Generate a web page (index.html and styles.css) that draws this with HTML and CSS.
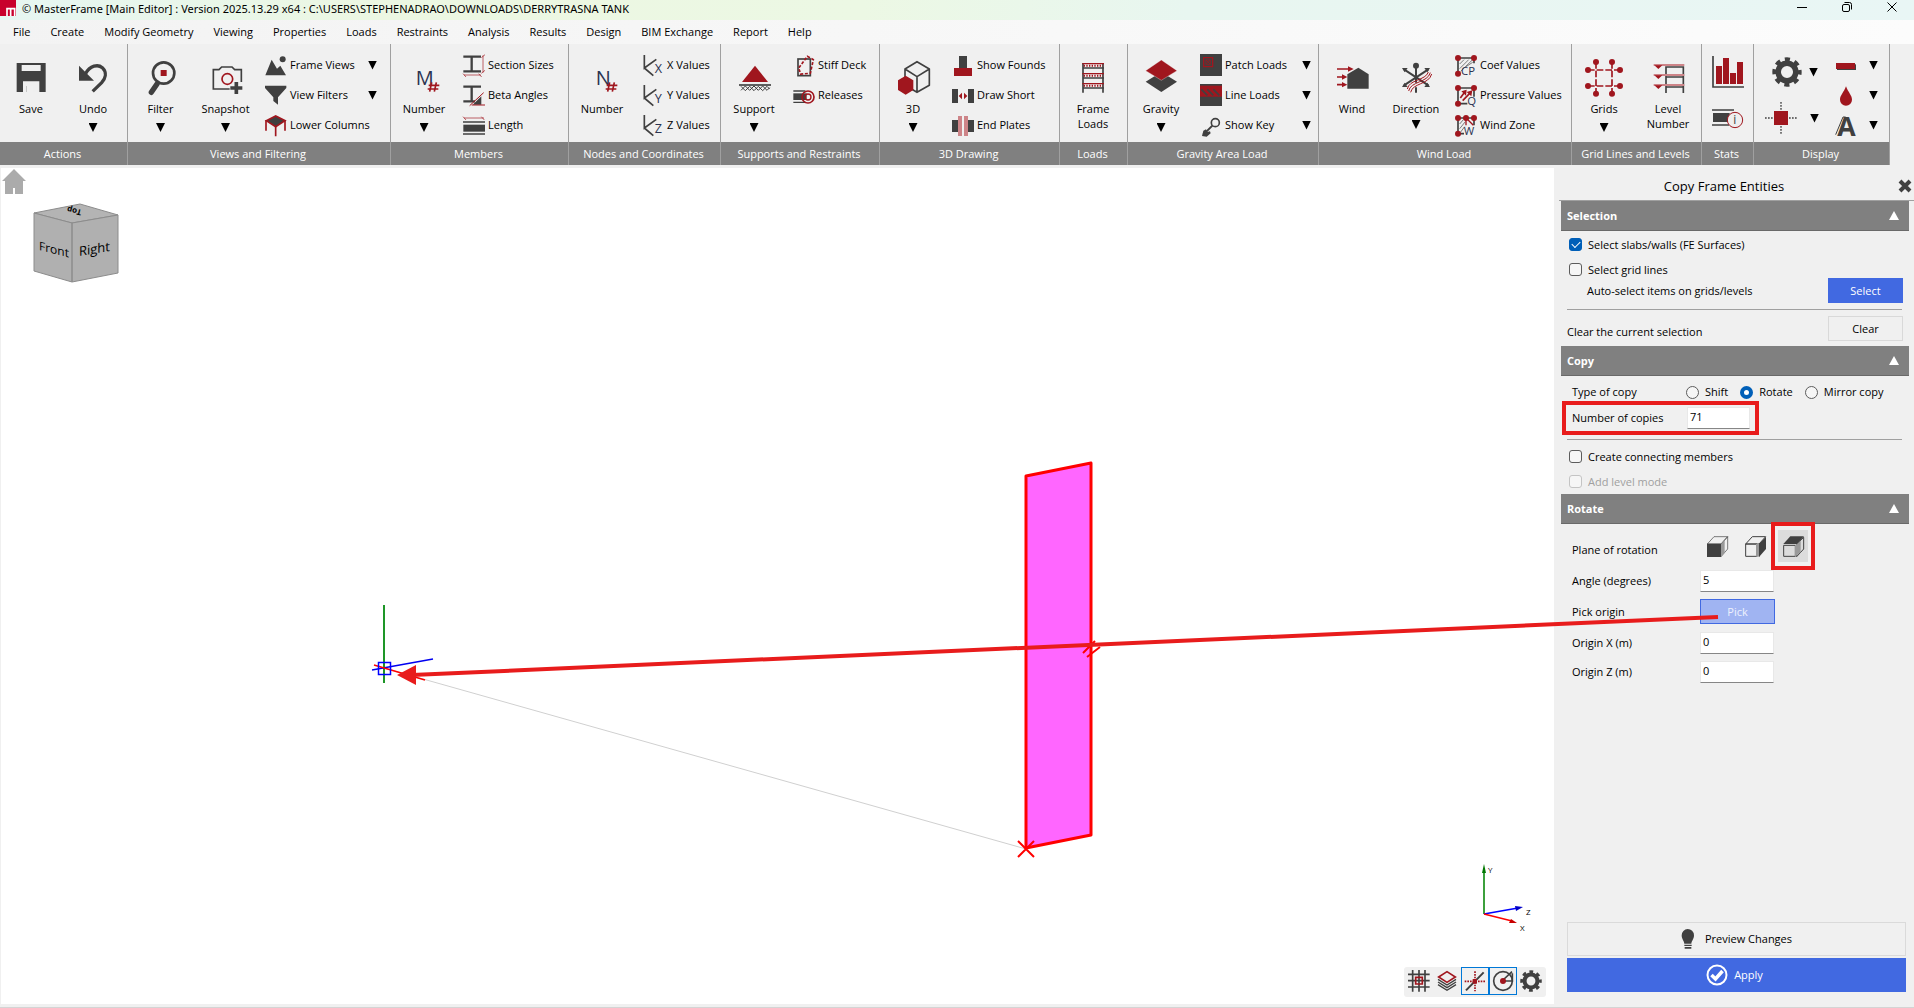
FILE: index.html
```html
<!DOCTYPE html>
<html lang="en">
<head>
<meta charset="utf-8">
<title>MasterFrame [Main Editor]</title>
<link rel="stylesheet" href="styles.css">
</head>
<body>
<svg class="defs" aria-hidden="true">
  <symbol id="gear" viewBox="-46 -46 92 92"><circle r="27" class="nk" stroke-width="17"/><circle r="37" class="nk" stroke-width="16" stroke-dasharray="15 14.06" stroke-dashoffset="7.5"/></symbol>
</svg>

<header class="titlebar">
  <svg class="logo" viewBox="0 0 48 48"><rect width="48" height="48" fill="#c8002c"/><path d="M21 48V26h23v22M32 48V28" fill="none" stroke="#fff" stroke-width="5"/></svg>
  <h1 class="title">© MasterFrame [Main Editor] : Version 2025.13.29 x64 : C:\USERS\STEPHENADRAO\DOWNLOADS\DERRYTRASNA TANK</h1>
  <div class="win">
    <button aria-label="Minimise"><svg viewBox="0 0 12 12"><path d="M1 6.500H11"/></svg></button>
    <button aria-label="Restore"><svg viewBox="0 0 12 12"><rect x="1.500" y="3.500" width="7" height="7" rx="1.500"/><path d="M3.500 1.500H8.500a2 2 0 0 1 2 2V8.500"/></svg></button>
    <button aria-label="Close"><svg viewBox="0 0 12 12"><path d="M1.500 1.500l9 9M10.500 1.500l-9 9"/></svg></button>
  </div>
</header>

<nav class="menu">
  <button>File</button><button>Create</button><button>Modify Geometry</button><button>Viewing</button><button>Properties</button><button>Loads</button><button>Restraints</button><button>Analysis</button><button>Results</button><button>Design</button><button>BIM Exchange</button><button>Report</button><button>Help</button>
</nav>

<div class="ribbon">
  <section class="group g-actions">
    <div class="tools">
      <button class="big"><svg viewBox="43 180 108 108"><path class="k" d="M54 189h87v87H103v-18H84v18H54z"/><path fill="#efefef" d="M69 195h57v18H69zM73 244h49v32H103v-18H84v18H73z"/></svg><span>Save</span></button>
      <button class="big"><svg viewBox="231 180 108 108"><path class="k" d="M243 197v45h45z"/><path class="nk" stroke-width="10" d="M262 222C276 196 300 192 313 203 328 218 322 236 311 248L284 274"/></svg><span>Undo</span><i class="dd"></i></button>
    </div>
    <h2>Actions</h2>
  </section>

  <section class="group g-views">
    <div class="tools">
      <button class="big"><svg viewBox="430 180 108 108"><circle class="nk" cx="492" cy="219" r="32" stroke-width="8"/><path class="nk" stroke-width="16" stroke-linecap="round" d="M472 252L455 277"/><rect class="r" x="483" y="210" width="18" height="18"/></svg><span>Filter</span><i class="dd"></i></button>
      <button class="big"><svg viewBox="623 180 108 108"><path class="nk" stroke-width="5" d="M688 267H639V209H656L664 201H695L703 209H723V246"/><circle class="nr" cx="681" cy="237" r="16" stroke-width="5"/><path class="nk" stroke-width="11" d="M690 264H726M708 246V282"/></svg><span>Snapshot</span><i class="dd"></i></button>
      <div class="stack">
        <button class="small"><svg viewBox="796 162 66 66"><path class="k" d="M797 226L816 179 832 206 842 197 859 226z"/><circle class="k" cx="849" cy="178" r="9"/></svg><span>Frame Views</span><i class="dd"></i></button>
        <button class="small"><svg viewBox="796 252 66 66"><path class="k" d="M796 257H860V264L835 292V314L821 303V292L796 264z"/></svg><span>View Filters</span><i class="dd"></i></button>
        <button class="small"><svg viewBox="796 342 66 66"><path class="nr" stroke-width="5" d="M799 361V392M856 361V392M828 380V409"/><path class="k" stroke="#a0161e" stroke-width="5" d="M800 362L828 348 856 362 828 380z"/></svg><span>Lower Columns</span></button>
      </div>
    </div>
    <h2>Views and Filtering</h2>
  </section>

  <section class="group g-members">
    <div class="tools">
      <button class="big"><svg viewBox="80 180 108 108"><text class="nv" x="109" y="254" font-size="60">M</text><path class="nr" stroke-width="5" d="M157 247L151 275M171 247L165 275M148 256H180M145 267H177"/></svg><span>Number</span><i class="dd"></i></button>
      <div class="stack">
        <button class="small"><svg viewBox="249 162 66 66"><path class="nk" stroke-width="7" d="M250 170H303M250 214H303M275 170V214"/><path class="nr" stroke-width="2" d="M309 166V218M304 173L315 164M304 220L315 211M252 225H303M249 221L258 231M296 221L305 231"/></svg><span>Section Sizes</span></button>
        <button class="small"><svg viewBox="249 252 66 66"><path class="nk" stroke-width="7" d="M250 260H303M250 304H285M275 260V304"/><path class="k" d="M278 314L304 289V314z"/><path class="nr" stroke-width="3" d="M269 317L311 278M275 315H315"/></svg><span>Beta Angles</span></button>
        <button class="small"><svg viewBox="249 342 66 66"><path class="nr" stroke-width="2" d="M252 354H312M249 350L258 360M304 350L313 360"/><rect class="k" x="250" y="374" width="65" height="21"/><path class="nk" stroke-width="5" d="M249 366H315M249 402H315"/></svg><span>Length</span></button>
      </div>
    </div>
    <h2>Members</h2>
  </section>

  <section class="group g-nodes">
    <div class="tools">
      <button class="big"><svg viewBox="614 180 108 108"><text class="nv" x="649" y="254" font-size="60">N</text><path class="nr" stroke-width="5" d="M691 247L685 275M705 247L699 275M682 256H714M679 267H711"/></svg><span>Number</span></button>
      <div class="stack">
        <button class="small"><svg viewBox="785 162 66 66"><path class="nk" stroke-width="5" d="M792 165V204L828 178M792 204L819 227"/><text class="nv" x="823" y="218" font-size="38">X</text></svg><span>X Values</span></button>
        <button class="small"><svg viewBox="785 252 66 66"><path class="nk" stroke-width="5" d="M792 255V294L828 268M792 294L819 317"/><text class="nv" x="823" y="308" font-size="38">Y</text></svg><span>Y Values</span></button>
        <button class="small"><svg viewBox="785 342 66 66"><path class="nk" stroke-width="5" d="M792 345V384L828 358M792 384L819 407"/><text class="nv" x="823" y="398" font-size="38">Z</text></svg><span>Z Values</span></button>
      </div>
    </div>
    <h2>Nodes and Coordinates</h2>
  </section>

  <section class="group g-supports">
    <div class="tools">
      <button class="big"><svg viewBox="1071 180 108 108"><path class="r" d="M1128 197L1167 246H1089z"/><path class="nk" stroke-width="5" d="M1080 255H1176"/><path class="nk" stroke-width="3" d="M1086 259l13 13 13-13 13 13 13-13 13 13 13-13 8 8M1086 271l13-13 13 13 13-13 13 13 13-13 13 13 8-8"/></svg><span>Support</span><i class="dd"></i></button>
      <div class="stack">
        <button class="small"><svg viewBox="1239 162 66 66"><rect class="nk" x="1254" y="177" width="37" height="50" stroke-width="5"/><path class="nr" stroke-width="5" stroke-dasharray="9 5" d="M1282 169L1300 179 1291 220 1262 222 1256 204z"/></svg><span>Stiff Deck</span></button>
        <button class="small"><svg viewBox="1239 252 66 66"><rect class="k" x="1240" y="280" width="40" height="20"/><path class="nk" stroke-width="4" d="M1240 273H1276M1240 307H1276"/><circle class="nr" cx="1284" cy="291" r="18" stroke-width="5"/><circle class="nr" cx="1284" cy="291" r="9" stroke-width="4"/></svg><span>Releases</span></button>
      </div>
    </div>
    <h2>Supports and Restraints</h2>
  </section>

  <section class="group g-3d">
    <div class="tools">
      <button class="big"><svg viewBox="48 180 108 108"><path class="nk" stroke-width="5" stroke-linejoin="round" d="M78 207L114 185 151 207V256L114 277 78 256zM78 207L114 230 151 207M114 230V277"/><path class="r" d="M57 241L80 227 103 241V270L80 284 57 270z"/></svg><span>3D</span><i class="dd"></i></button>
      <div class="stack">
        <button class="small"><svg viewBox="216 162 66 66"><rect class="k" x="237" y="168" width="24" height="38"/><rect class="r" x="222" y="204" width="54" height="24"/></svg><span>Show Founds</span></button>
        <button class="small"><svg viewBox="216 252 66 66"><path class="k" d="M216 267h18v42H216zM264 267h18v42H264z"/><path class="r" d="M236 288L246 278V298zM262 288L252 278V298z"/></svg><span>Draw Short</span></button>
        <button class="small"><svg viewBox="216 342 66 66"><path class="k" d="M216 360h20v36H216zM262 360h20v36H262z"/><path fill="#cd8488" d="M234 348h12v60H234zM252 348h12v60H252z"/></svg><span>End Plates</span></button>
      </div>
    </div>
    <h2>3D Drawing</h2>
  </section>

  <section class="group g-loads">
    <div class="tools">
      <button class="big"><svg viewBox="591 180 108 108"><path class="nk" stroke-width="5" d="M615 189V278M675 189V278M613 204H678M613 234H678M613 264H678"/><path class="nr" stroke-width="4" d="M613 191H678M613 221H678M613 251H678"/><path class="nr" stroke-width="6" stroke-dasharray="4 4" d="M617 197H674M617 227H674M617 257H674"/></svg><span>Frame<br>Loads</span></button>
    </div>
    <h2>Loads</h2>
  </section>

  <section class="group g-gravity">
    <div class="tools">
      <button class="big"><svg viewBox="794 180 108 108"><path class="k" d="M802 245L849 216 896 245 849 276z"/><path class="r" stroke="#efefef" stroke-width="1" d="M802 212L849 180 896 212 849 241z"/></svg><span>Gravity</span><i class="dd"></i></button>
      <div class="stack">
        <button class="small"><svg viewBox="960 162 66 66"><rect class="k" x="960" y="162" width="66" height="66"/><path class="nr" stroke-width="4" d="M971 173h27v27H971z"/><path class="nr" stroke-width="2" d="M978 180h13v13H978zl13 13M991 180l-13 13"/></svg><span>Patch Loads</span><i class="dd"></i></button>
        <button class="small"><svg viewBox="960 252 66 66"><rect class="k" x="960" y="252" width="66" height="66"/><rect class="r" x="960" y="257" width="66" height="33"/><path class="nk" stroke-width="5" d="M964 268l18 18M982 268l18 18M1000 268l18 18"/></svg><span>Line Loads</span><i class="dd"></i></button>
        <button class="small"><svg viewBox="960 342 66 66"><circle class="nk" cx="1006" cy="368" r="12" stroke-width="5"/><path class="nk" stroke-width="6" d="M997 377L970 404"/><path class="k" d="M966 408l4-16 8-4 4 8 8-2 2 6-12 10z"/></svg><span>Show Key</span><i class="dd"></i></button>
      </div>
    </div>
    <h2>Gravity Area Load</h2>
  </section>

  <section class="group g-wind">
    <div class="tools">
      <button class="big"><svg viewBox="15 30 108 108"><path class="k" d="M55 73L88 53 119 73V116H55z"/><path class="nr" stroke-width="5" d="M24 57H60M24 81H42M24 104H42"/><path class="r" d="M57 49L74 57 57 65zM39 73L55 81 39 89zM39 96L55 104 39 112z"/></svg><span>Wind</span></button>
      <button class="big near"><svg viewBox="207 30 108 108"><path class="nk" stroke-width="6" d="M261 46V98M225 58L298 106M298 58L225 106M261 112V128"/><circle class="k" cx="261" cy="47" r="9"/><path class="k" d="M219 54h17l-9 13zM303 54h-17l9 13zM219 111h17l-9-13zM303 111h-17l9-13z"/><path class="nr" stroke-width="3" d="M239 123C244 94 296 98 304 68M245 127C250 99 300 104 308 72M235 117C240 88 290 92 298 66"/></svg><span>Direction</span><i class="dd"></i></button>
      <div class="stack">
        <button class="small"><svg viewBox="375 12 66 66"><path class="nk" stroke-width="5" d="M384 24H432M384 24V71M432 24V40"/><path class="nk" stroke-width="2" d="M389 42L402 29M389 56L416 29M392 64L428 29M408 50L428 37"/><path class="r" d="M375 24a9 9 0 1 0 18 0a9 9 0 1 0-18 0M423 24a9 9 0 1 0 18 0a9 9 0 1 0-18 0M375 71a9 9 0 1 0 18 0a9 9 0 1 0-18 0"/><text class="nv" x="393" y="76" font-size="34">CP</text></svg><span>Coef Values</span></button>
        <button class="small"><svg viewBox="375 102 66 66"><path class="nk" stroke-width="5" d="M384 114H432V140M384 114V161H412"/><path class="nr" stroke-width="5" d="M391 144L406 124M398 152L422 127"/><path class="r" d="M394 124l16-5-2 18zM410 126l17-5-3 18zM375 114a9 9 0 1 0 18 0a9 9 0 1 0-18 0M423 114a9 9 0 1 0 18 0a9 9 0 1 0-18 0M375 161a9 9 0 1 0 18 0a9 9 0 1 0-18 0"/><text class="nv" x="412" y="164" font-size="34">Q</text></svg><span>Pressure Values</span></button>
        <button class="small"><svg viewBox="375 192 66 66"><path class="nk" stroke-width="5" d="M384 204H432M384 204V251H402M432 204V226"/><path class="nk" stroke-width="2" d="M389 222L400 209M389 236L406 215M392 246L404 230"/><path class="nr" stroke-width="4" d="M408 206V226M412 208L430 226"/><path class="r" d="M375 204a9 9 0 1 0 18 0a9 9 0 1 0-18 0M399 204a9 9 0 1 0 18 0a9 9 0 1 0-18 0M423 204a9 9 0 1 0 18 0a9 9 0 1 0-18 0M375 251a9 9 0 1 0 18 0a9 9 0 1 0-18 0"/><text class="nv" x="401" y="256" font-size="34">W</text></svg><span>Wind Zone</span></button>
      </div>
    </div>
    <h2>Wind Load</h2>
  </section>

  <section class="group g-grids">
    <div class="tools">
      <button class="big"><svg viewBox="777 30 108 108"><path class="nr" stroke-width="5" stroke-dasharray="20 6" d="M807 36V132M855 36V132M783 60H879M783 108H879"/><path class="nr" stroke-width="18" stroke-linecap="round" d="M807 36h0M855 36h0M807 131h0M855 131h0M783 60h0M783 108h0M879 60h0M879 108h0"/></svg><span>Grids</span><i class="dd"></i></button>
      <button class="big"><svg viewBox="959 30 108 108"><path class="nk" stroke-width="5" d="M1007 129V51H1059V129M1007 81H1059M1007 111H1059"/><path stroke="#cd8488" stroke-width="6" d="M970 45H1062M970 75H1062M970 105H1062"/><path class="r" d="M972 46h24l-12 11zM972 76h24l-12 11zM972 106h24l-12 11z"/></svg><span>Level<br>Number</span></button>
    </div>
    <h2>Grid Lines and Levels</h2>
  </section>

  <section class="group g-stats">
    <div class="tools icons">
      <button class="ic" aria-label="Statistics"><svg viewBox="36 15 102 102"><path class="nk" stroke-width="5" d="M42 18V111H135"/><path class="r" d="M51 48h18v54H51zM72 24h18v78H72zM93 69h18v33H93zM114 36h18v66H114z"/></svg></button>
      <button class="ic" aria-label="Member information"><svg viewBox="36 153 102 102"><path class="nk" stroke-width="5" d="M39 180H105M39 225H90"/><rect class="k" x="42" y="189" width="50" height="27"/><circle cx="108" cy="210" r="23" fill="#efefef" stroke="#a0161e" stroke-width="3"/><text class="nd" x="103" y="223" font-size="36">i</text></svg></button>
    </div>
    <h2>Stats</h2>
  </section>

  <section class="group g-display">
    <div class="tools icons">
      <div class="pair">
        <button class="ic gearbtn" aria-label="Settings"><svg><use href="#gear"/></svg><i class="dd"></i></button>
        <button class="ic nodebtn" aria-label="Node display"><svg viewBox="192 153 102 102"><path class="nk" stroke-width="4" stroke-dasharray="5 4" d="M195 204H291M243 156V252"/><rect class="r" x="222" y="183" width="42" height="42"/></svg><i class="dd"></i></button>
      </div>
      <div class="stack">
        <button class="small" aria-label="Line display"><svg viewBox="402 12 66 66"><rect class="k" x="408" y="43" width="57" height="17"/><rect class="r" x="405" y="39" width="57" height="18"/></svg><i class="dd"></i></button>
        <button class="small" aria-label="Colour"><svg viewBox="402 102 66 66"><path class="r" d="M435 109C442 128 453 136 453 149a18 18 0 0 1-36 0C417 136 428 128 435 109z"/></svg><i class="dd"></i></button>
        <button class="small" aria-label="Text display"><svg viewBox="402 192 66 66"><text class="nd bold" x="409" y="257" font-size="80">A</text><path class="nk" stroke-width="3" d="M404 254L426 201H434"/></svg><i class="dd"></i></button>
      </div>
    </div>
    <h2>Display</h2>
  </section>
</div>

<div class="workspace">
  <main class="viewport">
    <svg class="scene" viewBox="0 168 1554 836" preserveAspectRatio="xMinYMin meet">
      <path fill="#ababab" d="M2 181L14 169 26 181H23V194H15V188H13V194H5V181z"/>
      <g stroke="#8c8c8c" stroke-linejoin="round"><path fill="#b4b4b4" d="M34 213L80 204 118 215 72 223z"/><path fill="#b0b0b0" d="M34 213L72 223V282L34 271zM72 223L118 215V273L72 282z"/></g>
      <text class="cube front" transform="translate(39 250) skewY(14)">Front</text>
      <text class="cube" transform="translate(79 256) skewY(-9)">Right</text>
      <text class="cubetop" transform="translate(82 210) rotate(194)">Top</text>
      <path stroke="#d0d0d0" d="M384 668L1026 849"/>
      <path stroke="#1e9628" stroke-width="2" d="M384 605V683"/>
      <path stroke="#0000f0" stroke-width="1.500" d="M372 670L433 659"/>
      <path stroke="#ff0000" stroke-width="1.500" d="M374 665L425 680"/>
      <rect x="378.500" y="662.500" width="12" height="12" fill="none" stroke="#0000ff" stroke-width="1.500"/>
      <path fill="#ff66ff" stroke="#ff0000" stroke-width="3" stroke-linejoin="round" d="M1026 476L1091 463V835L1026 848z"/>
      <path stroke="#ff0000" stroke-width="2" d="M1018 841L1034 857M1034 841L1018 857M1083 653L1095 641M1087 657L1100 647"/>
    </svg>
    <svg class="triad" viewBox="1476 858 60 80">
      <path stroke="#3ca03c" stroke-width="2" d="M1484 914V868"/><path fill="#007800" d="M1482 873L1484 864 1486 873z"/>
      <path stroke="#0000ff" stroke-width="1.500" d="M1484 914L1518 908"/><path fill="#0000c8" d="M1515 906L1523 907 1516 911z"/>
      <path stroke="#ff0000" stroke-width="1.500" d="M1484 914L1512 921"/><path fill="#c80000" d="M1511 919L1517 923 1509 923z"/>
      <text x="1488" y="873">Y</text><text x="1526" y="915">Z</text><text x="1520" y="931">X</text>
    </svg>
    <div class="viewbar">
      <button aria-label="Grid"><svg viewBox="82 360 66 66"><path class="nk" stroke-width="5" d="M82 373H147M82 392H147M82 411H147M96 360V425M115 360V425M133 360V425"/><path class="nr" stroke-width="5" d="M105 382h20v20H105z"/></svg></button>
      <button aria-label="Layers"><svg viewBox="164 360 66 66"><path class="nk" stroke-width="4" d="M170 388L197 405 224 388M170 396L197 413 224 396M170 404L197 421 224 404"/><path fill="#efefef" stroke="#a0161e" stroke-width="5" d="M172 381L197 365 222 381 197 397z"/></svg></button>
      <button class="on" aria-label="Snap to line"><svg viewBox="246 360 66 66"><path class="nk" stroke-width="6" d="M252 421L305 367"/><path class="nr" stroke-width="5" stroke-dasharray="5 3" d="M248 394H310M279 364V424"/><path class="r" d="M272 387h13v14H272z"/></svg></button>
      <button class="on" aria-label="Snap to centre"><svg viewBox="329 360 66 66"><circle class="nk" cx="362" cy="393" r="28" stroke-width="5"/><path class="nk" stroke-width="5" d="M362 390L389 365M362 393H390V370"/><circle class="r" cx="362" cy="393" r="9"/></svg></button>
      <button aria-label="View settings"><svg><use href="#gear"/></svg></button>
    </div>
  </main>

  <aside class="panel">
    <header class="phead"><h2>Copy Frame Entities</h2><button aria-label="Close panel"><svg viewBox="0 0 12 12"><path class="nk" stroke-width="4" d="M1 1l10 10M11 1L1 11"/></svg></button></header>
    <div class="pbody">
      <h3>Selection<i class="up"></i></h3>
      <div class="sec sel">
        <label class="check"><input type="checkbox" checked>Select slabs/walls (FE Surfaces)</label>
        <label class="check"><input type="checkbox">Select grid lines</label>
        <div class="act auto"><span>Auto-select items on grids/levels</span><button class="btn blue">Select</button></div>
        <hr>
        <div class="act clear"><span>Clear the current selection</span><button class="btn">Clear</button></div>
      </div>
      <h3>Copy<i class="up"></i></h3>
      <div class="sec cpy">
        <div class="type" role="radiogroup" aria-label="Type of copy"><span>Type of copy</span>
          <label><input type="radio" name="type">Shift</label><label><input type="radio" name="type" checked>Rotate</label><label><input type="radio" name="type">Mirror copy</label></div>
        <div class="copies mark"><label for="copies">Number of copies</label><input id="copies" type="text" value="71"></div>
        <hr>
        <label class="check conn"><input type="checkbox">Create connecting members</label>
        <label class="check off"><input type="checkbox" disabled>Add level mode</label>
      </div>
      <h3>Rotate<i class="up"></i></h3>
      <div class="sec rot">
        <div class="field planes"><span>Plane of rotation</span>
          <button aria-label="Front plane"><svg viewBox="471 333 63 63"><path class="nk" stroke-width="2" d="M472 357L492 335H533L513 357zM513 395V357L533 335V372z"/><path fill="#999" d="M513 357L524 345V383L513 395z"/><path class="k" d="M471 356h42v40H471z"/></svg></button>
          <button aria-label="Side plane"><svg viewBox="585 333 63 63"><path class="nk" stroke-width="3" d="M587 357L607 335H647L627 357zM587 357H621V394H587z"/><path fill="#999" d="M618 357h12v38H618z"/><path class="k" d="M627 357L648 335V372L627 396z"/></svg></button>
          <button class="cur mark" aria-label="Top plane"><svg viewBox="699 333 63 63"><path class="nk" stroke-width="3" d="M701 361H736V394H701zM740 395V357L761 337V372z"/><path fill="#999" d="M735 361L752 347V382L735 395z"/><path class="k" d="M700 357L721 334H762L741 357z"/></svg></button>
        </div>
        <div class="field"><label for="angle">Angle (degrees)</label><input id="angle" type="text" value="5"></div>
        <div class="field origin"><span>Pick origin</span><button class="btn pick">Pick</button></div>
        <div class="field"><label for="ox">Origin X (m)</label><input id="ox" type="text" value="0"></div>
        <div class="field"><label for="oz">Origin Z (m)</label><input id="oz" type="text" value="0"></div>
      </div>
    </div>
    <footer>
      <button class="wide"><svg viewBox="870 237 66 66"><path class="k" d="M902 240a19 19 0 0 1 19 19c0 12-7 16-8 25H892c-1-9-8-13-8-25a19 19 0 0 1 18-19zM892 287h22v4H892zM893 294h20v5H893z"/></svg>Preview Changes</button>
      <button class="wide apply"><svg viewBox="0 0 22 22"><circle cx="11" cy="11" r="9.500" fill="none" stroke="#fff" stroke-width="2"/><path fill="none" stroke="#fff" stroke-width="3.500" d="M5.500 11L9.500 15 16.500 7"/></svg>Apply</button>
    </footer>
  </aside>
  <svg class="pointer" viewBox="0 168 1914 836" preserveAspectRatio="xMinYMin meet"><path stroke="#e81c1c" stroke-width="4" d="M1718 617L412 675"/><path fill="#e81c1c" d="M397 675L416 665V685z"/></svg>
</div>
</body>
</html>
```
FILE: styles.css
```css
* { box-sizing: border-box; }
body { margin: 0; min-height: 100vh; display: flex; flex-direction: column; background: #f0f0f0; color: #000; font: 11px/16px "Open Sans", "Noto Sans", sans-serif; }
button { font: inherit; color: inherit; background: none; border: 0; padding: 0; margin: 0; }
h1, h2, h3 { margin: 0; font: inherit; }
svg { display: block; flex: none; overflow: visible; }
.defs { position: absolute; width: 0; height: 0; }
.k { fill: #404040; }
.r { fill: #a0161e; }
.nk { fill: none; stroke: #404040; }
.nr { fill: none; stroke: #a0161e; }
.nv { fill: #2b3350; font-family: "Open Sans", sans-serif; }
.nd { fill: #404040; font-family: "Open Sans", sans-serif; }
.bold { font-weight: 700; }

.titlebar { display: flex; height: 20px; background: linear-gradient(90deg, #e6f6f2, #ecf7e2 20%, #ecf8e4 45%, #e8f6f0 62%, #e9f6f5); }
.logo { width: 16px; height: 16px; }
.title { padding-left: 6px; font-family: "Noto Sans", sans-serif; line-height: 18px; white-space: nowrap; }
.win { margin-left: auto; display: flex; gap: 33px; padding: 1px 16px 0 0; }
.win button { width: 12px; height: 12px; }
.win svg { width: 12px; height: 12px; fill: none; stroke: #000; }

.menu { display: flex; gap: 20px; height: 24px; padding-left: 13px; background: linear-gradient(90deg, #f3f3f3, #fcfcfc); }

.ribbon { display: flex; }
.group { display: flex; flex-direction: column; border-right: 1px solid #a0a0a0; }
.group h2 { height: 23px; padding-right: 2px; line-height: 23px; text-align: center; color: #fff; background: #808080; white-space: nowrap; }
.tools { display: flex; height: 98px; }
.big { display: flex; flex-direction: column; align-items: center; flex: 0 0 66px; padding-top: 16px; }
.big svg { width: 36px; height: 36px; margin-bottom: 5px; }
.big span { line-height: 15px; white-space: nowrap; }
.dd { flex: none; width: 9px; height: 9px; background: #000; clip-path: polygon(0 0, 100% 0, 50% 100%); }
.big .dd { margin-top: 7px; }
.big.near { flex-basis: 62px; }
.big.near .dd { margin-top: 4px; }
.stack { flex: 1; display: flex; flex-direction: column; padding-top: 6px; }
.small { display: flex; align-items: center; gap: 3px; height: 30px; white-space: nowrap; }
.small svg { width: 22px; height: 22px; }
.small .dd { margin-left: auto; }
.g-actions { width: 128px; }
.g-actions .big { flex-basis: 62px; }
.g-views { width: 263px; }
.g-views .big { flex-basis: 65px; }
.g-views .stack { padding-right: 13px; padding-left: 7px; }
.g-members { width: 178px; }
.g-members .stack { padding-left: 6px; }
.g-nodes { width: 152px; }
.g-nodes .stack { padding-left: 7px; }
.g-supports { width: 159px; }
.g-supports .stack { padding-left: 6px; }
.g-3d { width: 180px; }
.g-3d .stack { padding-left: 6px; }
.g-loads { width: 68px; }
.g-gravity { width: 191px; }
.g-gravity .stack { padding: 6px 7px 0 6px; }
.g-wind { width: 253px; }
.g-wind .stack { padding-left: 8px; }
.g-grids { width: 130px; }
.g-grids .big { flex-basis: 64px; }
.g-stats { width: 52px; }
.g-display { width: 136px; }
.icons { gap: 4px; }
.g-stats .icons { flex-direction: column; align-items: center; padding-top: 11px; gap: 12px; }
.ic { display: flex; align-items: center; height: 34px; }
.ic svg { width: 34px; height: 34px; }
.pair { display: flex; flex-direction: column; gap: 12px; padding: 11px 0 0 10px; }
.gearbtn { gap: 7px; padding-left: 8px; }
.gearbtn svg { width: 30px; height: 30px; }
.nodebtn { gap: 12px; }
.g-display .stack { padding: 6px 11px 0 12px; }

.workspace { position: relative; flex: 1; display: flex; margin-top: 3px; border-bottom: 1px solid #d4d4d4; }
.viewport { position: relative; flex: 1; margin: 0 0 3px 1px; background: #fff; }
.scene { position: absolute; left: -1px; top: 0; width: calc(100% + 1px); }
.cube { font-size: 13px; }
.cube.front { font-size: 12px; }
.cubetop { font-size: 8px; font-weight: 700; }
.triad { position: absolute; right: 18px; bottom: 66px; width: 60px; height: 80px; fill: none; }
.triad text { font-size: 8px; fill: #000; }
.viewbar { position: absolute; right: 8px; bottom: 7px; display: flex; padding: 0 1px 2px; background: #f0f0f0; border-radius: 3px; }
.viewbar button { display: grid; place-items: center; width: 28px; height: 28px; border: 1px solid transparent; }
.viewbar .on { border-color: #0078d7; }
.viewbar svg { width: 22px; height: 22px; }
.pointer { position: absolute; left: 0; top: 0; width: 100%; pointer-events: none; }

.panel { flex: 0 0 360px; display: flex; flex-direction: column; padding-left: 5px; }
.phead { display: flex; align-items: center; height: 33px; padding: 3px 3px 0 0; border-bottom: 1px solid #a0a0a0; }
.phead h2 { flex: 1; text-align: center; padding-right: 10px; font-size: 13px; font-weight: 500; }
.phead svg { width: 12px; height: 12px; }
.pbody { padding: 0 5px 0 2px; }
.panel h3 { display: flex; align-items: center; justify-content: space-between; height: 30px; padding: 0 10px 0 6px; color: #fff; font-weight: 700; background: #808080; border-bottom: 1px solid #696969; }
.up { width: 10px; height: 9px; background: #fff; clip-path: polygon(50% 0, 100% 100%, 0 100%); }
.sec { padding: 0 6px; }
.check { display: flex; align-items: center; gap: 6px; height: 25px; padding-left: 2px; }
input[type="checkbox"], input[type="radio"] { appearance: none; flex: none; display: grid; place-items: center; width: 13px; height: 13px; margin: 0; border: 1px solid #5c5c5c; border-radius: 3px; background: #f6f6f6; }
input[type="radio"] { border-radius: 50%; }
input[type="checkbox"]:checked { border-color: #005fb8; background: #005fb8; }
input[type="checkbox"]:checked::before { content: ""; width: 7px; height: 4px; margin-bottom: 2px; border: solid #fff; border-width: 0 0 1px 1px; transform: rotate(-45deg); }
input[type="radio"]:checked { border: 4px solid #005fb8; background: #fff; }
.off { color: #a0a0a0; }
.off input { border-color: #c4c4c4; }
hr { margin: 0; border: 0; height: 1px; background: #a0a0a0; }
.sec hr { margin-right: 1px; }
.btn { width: 75px; height: 25px; border: 1px solid #d9d9d9; }
.blue { color: #fff; background: #4169e1; border-color: #4169e1; }
.pick { color: #eef1fd; background: #a0b4f2; border-color: #4169e1; }
.act { display: flex; justify-content: space-between; }
.sel { padding-top: 1px; height: 115px; }
.auto { padding-left: 20px; height: 25px; margin: -4px 0 6px; align-items: center; }
.clear { margin-top: 6px; align-items: flex-end; }
.clear span { line-height: 18px; }
.sec.cpy { padding-top: 8px; height: 118px; }
.type { display: flex; align-items: center; gap: 6px; padding-left: 5px; }
.type span { width: 108px; }
.type label { display: flex; align-items: center; gap: 6px; margin-right: 6px; white-space: nowrap; }
.mark { border: 4px solid #e81c1c; }
.copies { display: flex; align-items: center; width: 197px; height: 34px; margin: 1px 0 4px -5px; padding-left: 6px; }
.copies label { width: 115px; }
input[type="text"] { width: 74px; height: 22px; padding: 0 0 3px 2px; font: inherit; background: #fff; border: 1px solid #e8e8e8; border-bottom-color: #868686; }
.copies input[type="text"] { width: 63px; }
.conn { margin-top: 4px; }
.sec.rot { padding-top: 2px; }
.field { display: flex; align-items: center; height: 29px; padding-left: 5px; }
.field > span:first-child, .field > label { width: 128px; }
.planes { height: 40px; }
.planes button { display: grid; place-items: center; width: 38px; height: 38px; }
.planes > span:first-child { width: 126px; padding-top: 8px; }
.planes svg { width: 21px; height: 21px; }
.planes .cur { width: 44px; height: 48px; margin-left: -3px; padding: 4px 3px; border: 4px solid #e81c1c; background: #dcdcdc content-box; }
.origin { height: 33px; }
footer { margin-top: auto; display: flex; flex-direction: column; gap: 2px; padding: 0 8px 15px 8px; }
.wide { display: flex; align-items: center; justify-content: center; gap: 6px; height: 34px; padding-right: 4px; border: 1px solid #dadada; }
.wide svg { width: 22px; height: 22px; }
.apply { color: #fff; background: #4169e1; border-color: #4169e1; }
```
